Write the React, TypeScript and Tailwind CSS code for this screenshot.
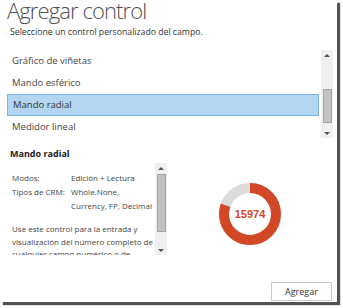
import React from 'react';

const items = ['Gráfico de viñetas', 'Mando esférico', 'Mando radial', 'Medidor lineal'];

const ScrollBar: React.FC<{ className: string; thumb: string }> = ({ className, thumb }) => (
  <div className={`flex flex-col items-center bg-[#f0f0f0] ${className}`}>
    <div className="flex h-[10px] items-center justify-center">
      <div className="h-0 w-0 border-x-[3px] border-b-[3px] border-x-transparent border-b-[#555]" />
    </div>
    <div className={`w-[9px] border border-[#a6a6a6] bg-[#c2c2c2] ${thumb}`} />
    <div className="flex-1" />
    <div className="flex h-[10px] items-center justify-center">
      <div className="h-0 w-0 border-x-[3px] border-t-[3px] border-x-transparent border-t-[#555]" />
    </div>
  </div>
);

const Donut: React.FC<{ value: number; fraction: number }> = ({ value, fraction }) => {
  const c = 2 * Math.PI * 26;
  return (
    <div className="relative h-[64px] w-[64px]">
      <svg width="64" height="64" viewBox="0 0 64 64">
        <circle cx="32" cy="32" r="26" fill="none" stroke="#dcdcdc" strokeWidth="10" />
        <circle
          cx="32"
          cy="32"
          r="26"
          fill="none"
          stroke="#d24726"
          strokeWidth="10"
          strokeDasharray={`${c * fraction} ${c}`}
          transform="rotate(-90 32 32)"
        />
      </svg>
      <div className="absolute inset-0 flex items-center justify-center font-['Liberation_Sans',Arial,sans-serif] text-[11px] font-bold text-[#d24726]">
        {value}
      </div>
    </div>
  );
};

export default function App() {
  return (
    <div className="h-[308px] w-[343px] overflow-hidden bg-white font-['Open_Sans',sans-serif] text-[#444]">
      <div className="flex h-[302px] w-[337px] flex-col bg-white shadow-[3px_3px_1px_rgba(40,40,40,0.8)]">
        <h1 className="pl-[7px] text-[22px] font-light leading-[20px] tracking-[-0.9px] text-[#505050]">
          Agregar control
        </h1>
        <p className="mt-[6px] pl-[10px] text-[8.7px] leading-[12px] text-[#333]">
          Seleccione un control personalizado del campo.
        </p>

        <div className="mt-[12px] flex h-[88px] pl-[7px] pr-[4px]">
          <ul className="flex-1 pr-[2px]">
            {items.map((it, i) => (
              <li
                key={it}
                className={`flex h-[22px] items-center pl-[5px] text-[9.5px] ${
                  i === 2 ? 'border border-[#7eb4ea] bg-[#b2d6f2] pl-[4px] text-[#333]' : ''
                }`}
              >
                {it}
              </li>
            ))}
          </ul>
          <ScrollBar className="h-[88px] w-[12px]" thumb="mt-[29px] h-[34px]" />
        </div>

        <h2 className="mt-[10px] pl-[10px] text-[9px] font-bold leading-[12px] text-[#222]">Mando radial</h2>

        <div className="mt-[3px] flex h-[92px]">
          <div className="flex w-[170px] pl-[12px] pr-[3px]">
            <div className="flex-1 overflow-hidden pt-[8px] text-[8px] leading-[14px]">
              <div className="flex whitespace-nowrap">
                <span className="w-[59px]">Modos:</span>
                <span>Edición + Lectura</span>
              </div>
              <div className="flex whitespace-nowrap">
                <span className="w-[59px]">Tipos de CRM:</span>
                <span>
                  Whole.None,
                  <br />
                  Currency, FP, Decimal
                </span>
              </div>
              <p className="mt-[10px] leading-[12.5px]">
                Use este control para la entrada y visualización del número completo de cualquier campo numérico o de
                moneda.
              </p>
            </div>
            <ScrollBar className="h-[92px] w-[12px]" thumb="mt-[1px] h-[58px]" />
          </div>
          <div className="flex flex-1 items-center pl-[48px] pt-[10px]">
            <Donut value={15974} fraction={0.8} />
          </div>
        </div>

        <div className="mt-[27px] flex justify-end pr-[5px]">
          <button className="h-[19px] w-[61px] border border-[#c8c8c8] bg-white text-[9px] text-[#333]">Agregar</button>
        </div>
      </div>
    </div>
  );
}
